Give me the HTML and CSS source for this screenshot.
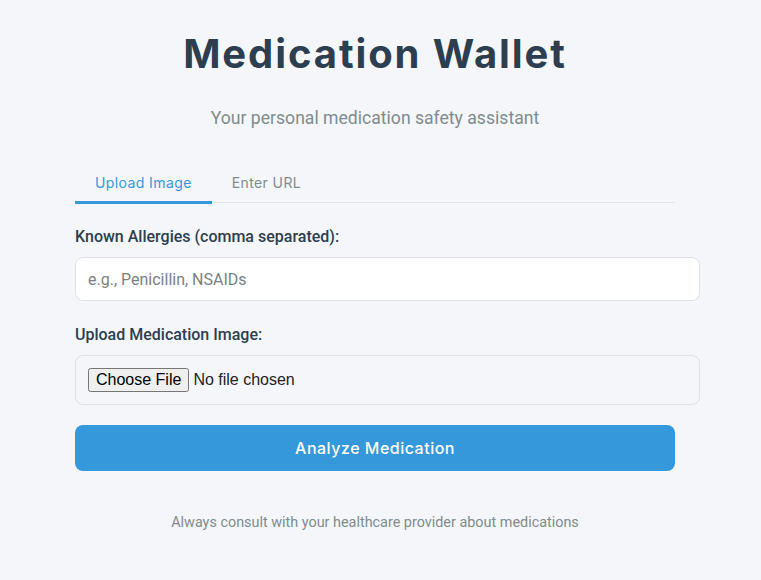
FILE: index.html
```html
<!DOCTYPE html>
<html lang="en">
<head>
<meta charset="utf-8">
<title>Medication Wallet</title>
<link rel="stylesheet" href="styles.css">
</head>
<body>
<div class="container">
  <header class="header">
    <h1 class="title">Medication Wallet</h1>
    <p class="subtitle">Your personal medication safety assistant</p>
  </header>
  <nav class="tabs">
    <button class="tab active">Upload Image</button>
    <button class="tab">Enter URL</button>
  </nav>
  <form class="form">
    <div class="field">
      <label class="label" for="allergies">Known Allergies (comma separated):</label>
      <input class="text-input" id="allergies" type="text" placeholder="e.g., Penicillin, NSAIDs">
    </div>
    <div class="field">
      <label class="label" for="file">Upload Medication Image:</label>
      <div class="file-box"><input class="file-input" id="file" type="file"></div>
    </div>
    <button class="submit" type="button">Analyze Medication</button>
  </form>
  <p class="footer">Always consult with your healthcare provider about medications</p>
</div>
</body>
</html>
```
FILE: styles.css
```css
html, body {
  margin: 0;
  padding: 0;
  background: #f5f6fa;
}
body {
  font-family: Roboto, "Liberation Sans", sans-serif;
  color: #2c3e50;
}
.container {
  width: 600px;
  margin: 0 0 0 75px;
  padding-top: 30px;
}
.header {
  text-align: center;
}
.title {
  margin: 0;
  font-family: Inter, "Open Sans", sans-serif;
  font-weight: 700;
  font-size: 40px;
  line-height: 48px;
  letter-spacing: 1.9px;
  color: #2c3e50;
}
.subtitle {
  margin: 28px 0 0;
  font-size: 17.6px;
  line-height: 24px;
  color: #7f8c8d;
}
.tabs {
  display: flex;
  margin-top: 36px;
  border-bottom: 1px solid #dfe3e8;
}
.tab {
  background: none;
  border: none;
  border-bottom: 3px solid transparent;
  margin-bottom: -2px;
  padding: 8px 20px 9px;
  font-family: Inter, "Open Sans", sans-serif;
  font-size: 14px;
  line-height: 18px;
  letter-spacing: 0.4px;
  color: #7f8c8d;
  cursor: pointer;
}
.tab.active {
  color: #3498db;
  border-bottom-color: #3498db;
}
.form {
  display: flex;
  flex-direction: column;
  margin-top: 24px;
}
.field {
  margin-bottom: 24px;
}
.field:last-of-type {
  margin-bottom: 20px;
}
.label {
  display: block;
  font-size: 16px;
  font-weight: 500;
  line-height: 20px;
  margin-bottom: 10px;
  color: #2c3e50;
}
.text-input {
  display: block;
  width: 599px;
  height: 42px;
  padding: 0 12px;
  border: 1px solid #dde1e6;
  border-radius: 8px;
  background: #fff;
  font-family: Roboto, sans-serif;
  font-size: 16px;
  color: #2c3e50;
  box-sizing: content-box;
  outline: none;
}
.text-input::placeholder {
  color: #7a7f85;
}
.file-box {
  width: 599px;
  padding: 12px;
  border: 1px solid #dde1e6;
  border-radius: 8px;
  background: #f5f6fa;
}
.file-input {
  font-family: "Liberation Sans", Arial, sans-serif;
  font-size: 16px;
  color: #222;
}
.submit {
  height: 46px;
  width: 600px;
  border: none;
  border-radius: 8px;
  background: #3498db;
  color: #fff;
  font-family: Inter, "Open Sans", sans-serif;
  font-size: 16px;
  font-weight: 500;
  letter-spacing: 0.5px;
  cursor: pointer;
}
.footer {
  margin: 43px 0 0;
  text-align: center;
  font-size: 14.4px;
  color: #7f8c8d;
}
```
